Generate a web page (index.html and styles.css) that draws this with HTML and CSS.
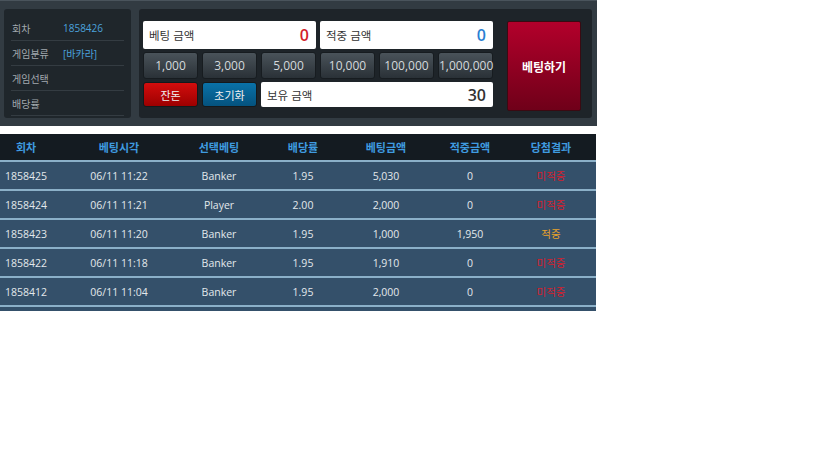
FILE: index.html
```html
<!DOCTYPE html>
<html>

<head>
    <title>베팅</title>
    <link rel="stylesheet" href="styles.css">
</head>

<body>
    <div class="board">
        <div class="info">
            <div class="info-row"><span class="label">회차</span><span class="value">1858426</span></div>
            <div class="info-row"><span class="label">게임분류</span><span class="value">[바카라]</span></div>
            <div class="info-row"><span class="label">게임선택</span><span class="value"></span></div>
            <div class="info-row"><span class="label">배당률</span><span class="value"></span></div>
        </div>

        <div class="controls">
            <div class="grid">
                <div class="field wide3"><span>베팅 금액</span><b class="red">0</b></div>
                <div class="field wide3"><span>적중 금액</span><b class="blue">0</b></div>

                <button class="chip">1,000</button>
                <button class="chip">3,000</button>
                <button class="chip">5,000</button>
                <button class="chip">10,000</button>
                <button class="chip">100,000</button>
                <button class="chip">1,000,000</button>

                <button class="action change">잔돈</button>
                <button class="action reset">초기화</button>
                <div class="field wide4"><span>보유 금액</span><b>30</b></div>
            </div>
            <button class="bet">베팅하기</button>
        </div>
    </div>

    <div class="history">
        <div class="row head">
            <span>회차</span><span>베팅시각</span><span>선택베팅</span><span>배당률</span><span>베팅금액</span><span>적중금액</span><span>당첨결과</span>
        </div>
        <div class="row">
            <span>1858425</span><span>06/11 11:22</span><span>Banker</span><span>1.95</span><span>5,030</span><span>0</span><span class="lose">미적중</span>
        </div>
        <div class="row">
            <span>1858424</span><span>06/11 11:21</span><span>Player</span><span>2.00</span><span>2,000</span><span>0</span><span class="lose">미적중</span>
        </div>
        <div class="row">
            <span>1858423</span><span>06/11 11:20</span><span>Banker</span><span>1.95</span><span>1,000</span><span>1,950</span><span class="win">적중</span>
        </div>
        <div class="row">
            <span>1858422</span><span>06/11 11:18</span><span>Banker</span><span>1.95</span><span>1,910</span><span>0</span><span class="lose">미적중</span>
        </div>
        <div class="row">
            <span>1858412</span><span>06/11 11:04</span><span>Banker</span><span>1.95</span><span>2,000</span><span>0</span><span class="lose">미적중</span>
        </div>
    </div>
</body>

</html>
```

FILE: styles.css
```css
body {
    margin: 0;
    background: #fff;
    font-family: "Open Sans", "Noto Sans CJK KR", sans-serif;
}

.board {
    width: 597px;
    height: 126px;
    box-sizing: border-box;
    padding: 8px 5px 8px 4px;
    display: flex;
    gap: 8px;
    background: #323b42;
    border-top: 1px solid #4a545c;
}

.info {
    width: 129px;
    box-sizing: border-box;
    padding: 7px 7px 0 7px;
    background: #1f262b;
    border-radius: 3px;
}

.info-row {
    display: flex;
    height: 24px;
    align-items: center;
    border-bottom: 1px solid #343c42;
    font-size: 10px;
    padding-left: 1px;
}

.info-row .label {
    width: 51px;
    color: #a2a9ae;
}

.info-row .value {
    color: #4ba2dc;
}

.controls {
    flex: 1;
    display: flex;
    gap: 14px;
    padding: 12px 11px 7px 4px;
    background: #1e2429;
    border-radius: 3px;
}

.grid {
    display: grid;
    grid-template-columns: repeat(6, 55px);
    grid-template-rows: 28px 27px 25px;
    gap: 3px 4px;
}

.field {
    display: flex;
    align-items: center;
    justify-content: space-between;
    padding: 0 7px 0 6px;
    background: #fff;
    border-radius: 2px;
}

.field span {
    font-size: 11.5px;
    color: #333;
}

.field b {
    font-size: 16px;
    font-weight: 600;
    color: #333;
}

.wide3 {
    grid-column: span 3;
}

.wide4 {
    grid-column: span 4;
}

.red {
    color: #d2202a !important;
}

.blue {
    color: #2b7fd2 !important;
}

.chip {
    font-family: "Open Sans", sans-serif;
    font-size: 12px;
    color: #d4d9dc;
    background: linear-gradient(#4a535a, #2a3137);
    border: 1px solid #171c20;
    border-radius: 3px;
    padding: 0;
}

.action {
    font-family: "Noto Sans CJK KR", sans-serif;
    font-size: 11px;
    color: #f0f0f0;
    border: 1px solid #14191c;
    border-radius: 3px;
    padding: 0;
}

.change {
    background: linear-gradient(#d30d0d, #9c0000);
}

.reset {
    background: linear-gradient(#0a72a8, #04527e);
}

.bet {
    width: 74px;
    font-family: "Noto Sans CJK KR", sans-serif;
    font-size: 12px;
    font-weight: 700;
    color: #fff;
    background: linear-gradient(#b3002b, #6f0019);
    border: 1px solid #3a0a12;
    border-radius: 2px;
}

.history {
    width: 596px;
    margin-top: 8px;
    background: #34506a;
    padding-bottom: 4px;
}

.row {
    display: grid;
    grid-template-columns: 52px 134px 66px 102px 64px 104px 58px 1fr;
    height: 27px;
    align-items: center;
    text-align: center;
    font-size: 10.5px;
    color: #e3e8ec;
    border-bottom: 2px solid #8bb0c8;
}

.row.head {
    height: 26px;
    background: #141b21;
    color: #3f9be0;
    font-size: 11px;
    font-weight: 700;
    font-family: "Noto Sans CJK KR", sans-serif;
}

.lose {
    color: #d3202e;
    font-family: "Noto Sans CJK KR", sans-serif;
}

.win {
    color: #e6a22a;
    font-family: "Noto Sans CJK KR", sans-serif;
}
```
